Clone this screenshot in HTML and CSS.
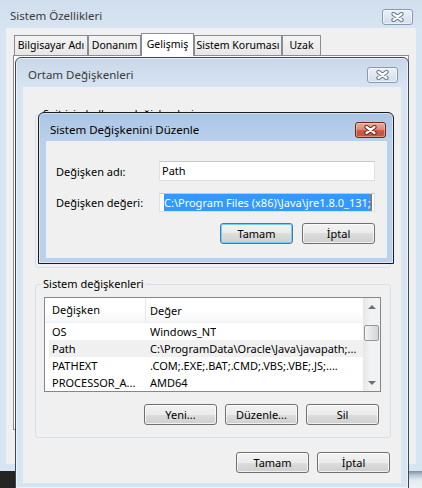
FILE: index.html
```html
<!DOCTYPE html>
<html lang="tr">
<head>
<meta charset="utf-8">
<title>Sistem Özellikleri</title>
<link rel="stylesheet" href="styles.css">
</head>
<body>
<div class="window outer">
  <div class="titlebar outer-title">
    <span class="title title-inactive">Sistem Özellikleri</span>
    <span class="close close-inactive"><svg class="xglyph" width="13" height="10" viewBox="0 0 13 10"><path class="x-out" d="M2.5 2 L10.5 8 M10.5 2 L2.5 8"/><path class="x-in" d="M2.5 2 L10.5 8 M10.5 2 L2.5 8"/></svg></span>
  </div>
  <div class="outer-client">
    <div class="tabs">
      <span class="tab tab-computer">Bilgisayar Adı</span>
      <span class="tab tab-hardware">Donanım</span>
      <span class="tab tab-advanced active">Gelişmiş</span>
      <span class="tab tab-protection">Sistem Koruması</span>
      <span class="tab tab-remote">Uzak</span>
    </div>
    <div class="tabpanel"></div>
  </div>
</div>

<div class="window middle">
  <div class="titlebar middle-title">
    <span class="title title-inactive">Ortam Değişkenleri</span>
    <span class="close close-inactive"><svg class="xglyph" width="13" height="10" viewBox="0 0 13 10"><path class="x-out" d="M2.5 2 L10.5 8 M10.5 2 L2.5 8"/><path class="x-in" d="M2.5 2 L10.5 8 M10.5 2 L2.5 8"/></svg></span>
  </div>
  <div class="middle-client">
    <fieldset class="group group-user">
      <legend>Sait için kullanıcı değişkenleri</legend>
    </fieldset>
    <fieldset class="group group-system">
      <legend>Sistem değişkenleri</legend>
      <div class="listview">
        <div class="lv-main">
          <div class="lv-header"><span class="h1">Değişken</span><span class="h2">Değer</span></div>
          <div class="lv-row"><span class="c1">OS</span><span class="c2">Windows_NT</span></div>
          <div class="lv-row sel"><span class="c1">Path</span><span class="c2">C:\ProgramData\Oracle\Java\javapath;...</span></div>
          <div class="lv-row"><span class="c1">PATHEXT</span><span class="c2">.COM;.EXE;.BAT;.CMD;.VBS;.VBE;.JS;....</span></div>
          <div class="lv-row"><span class="c1">PROCESSOR_A...</span><span class="c2">AMD64</span></div>
        </div>
        <div class="scrollbar">
          <span class="sb-btn"><span class="arrow-up"></span></span>
          <span class="sb-track"><span class="thumb"></span></span>
          <span class="sb-btn"><span class="arrow-down"></span></span>
        </div>
      </div>
      <div class="btnrow group-buttons">
        <button class="btn">Yeni...</button>
        <button class="btn">Düzenle...</button>
        <button class="btn">Sil</button>
      </div>
    </fieldset>
    <div class="btnrow dialog-buttons">
      <button class="btn">Tamam</button>
      <button class="btn">İptal</button>
    </div>
  </div>
</div>

<div class="window inner">
  <div class="titlebar inner-title">
    <span class="title">Sistem Değişkenini Düzenle</span>
    <span class="close close-active"><svg class="xglyph" width="13" height="10" viewBox="0 0 13 10"><path class="x-out" d="M2.5 2 L10.5 8 M10.5 2 L2.5 8"/><path class="x-in" d="M2.5 2 L10.5 8 M10.5 2 L2.5 8"/></svg></span>
  </div>
  <div class="inner-client">
    <div class="field">
      <span class="label">Değişken adı:</span>
      <span class="textbox">Path</span>
    </div>
    <div class="field">
      <span class="label">Değişken değeri:</span>
      <span class="textbox textbox-sel"><span class="selection">C:\Program Files (x86)\Java\jre1.8.0_131;</span><span class="caret"></span></span>
    </div>
    <div class="btnrow inner-buttons">
      <button class="btn btn-default">Tamam</button>
      <button class="btn">İptal</button>
    </div>
  </div>
</div>

<div class="desk-edge"></div>
</body>
</html>
```
FILE: styles.css
```css
* { box-sizing: border-box; }
html, body { margin: 0; }
body {
  width: 422px;
  height: 488px;
  overflow: hidden;
  position: relative;
  background: #242424;
  font-family: "Noto Sans", "Open Sans", sans-serif;
  font-size: 11px;
  line-height: 15px;
  color: #000;
}

/* generic window parts */
.window { position: absolute; display: flex; flex-direction: column; }
.titlebar { display: flex; justify-content: space-between; align-items: flex-start; flex: none; }
.title { white-space: nowrap; font-size: 11.5px; }
.title-inactive { color: #3b3b3b; }
.close {
  width: 31px;
  height: 16px;
  border-radius: 3px;
  display: flex;
  align-items: center;
  justify-content: center;
  flex: none;
}
.close-inactive {
  border: 1px solid #8b99ad;
  background: linear-gradient(#eaf0f7, #d3deeb);
  box-shadow: inset 0 0 0 1px rgba(255,255,255,0.55);
}
.close-active {
  border: 1px solid #6a2a22;
  background: linear-gradient(#eaae9f, #d98b79 45%, #c85a45 55%, #c2553f);
  box-shadow: inset 0 0 0 1px rgba(255,215,205,0.45);
}
.x-out { stroke: #667489; stroke-width: 4.2; stroke-linecap: round; fill: none; }
.x-in { stroke: #ffffff; stroke-width: 2.2; stroke-linecap: round; fill: none; }
.close-active .x-out { stroke: #6b2418; }

/* outer window */
.outer {
  left: 0;
  top: 0;
  width: 422px;
  height: 471px;
  padding: 0 6px;
  background: linear-gradient(#d1deed, #d7e4f2 30px);
}
.outer-title { height: 28px; padding: 9px 3px 0 4px; }
.outer-title .title { margin-top: -1px; }
.outer-client {
  width: 410px;
  height: 436px;
  background: #f0f0f0;
  padding: 5px 0 0 7px;
}
.tabs {
  display: flex;
  align-items: flex-end;
  height: 22px;
  padding-left: 1px;
  position: relative;
  z-index: 1;
}
.tab {
  height: 20px;
  padding: 0;
  border: 1px solid #898c95;
  border-bottom: none;
  background: linear-gradient(#f4f4f4, #e7e7e7);
  line-height: 18px;
  font-size: 10.5px;
  text-align: center;
  white-space: nowrap;
  overflow: hidden;
  flex: none;
}
.tab-computer { width: 74px; }
.tab-hardware { width: 53px; }
.tab-advanced { width: 53px; }
.tab-protection { width: 88px; }
.tab-remote { width: 39px; }
.tab.active {
  height: 23px;
  background: #fff;
  margin-bottom: -1px;
  line-height: 20px;
}
.tabpanel {
  width: 396px;
  height: 375px;
  border: 1px solid #898c95;
  background: #fff;
}

/* middle window */
.middle {
  left: 15px;
  top: 57px;
  width: 394px;
  height: 432px;
  border: 1px solid #3c4550;
  border-radius: 6px 6px 0 0;
  padding: 0 7px;
  background: linear-gradient(#c8d7ea, #d7e4f2 30px);
  box-shadow: inset 0 0 0 1px rgba(255,255,255,0.55);
}
.middle-title { height: 29px; padding: 9px 3px 0 5px; }
.middle-client {
  height: 396px;
  background: #f0f0f0;
  padding: 19px 10px 0 12px;
  display: flex;
  flex-direction: column;
}
.group {
  margin: 0;
  padding: 5px 9px 0 8px;
  border: 1px solid #d5dfe5;
  border-radius: 3px;
  height: 162px;
  min-inline-size: 0;
  flex: none;
}
.group legend {
  padding: 0 2px;
  margin-left: -3px;
  line-height: 16px;
  white-space: nowrap;
}
.group-system { margin-top: 8px; }

.listview {
  width: 337px;
  height: 95px;
  border: 1px solid #828790;
  background: #fff;
  display: flex;
}
.lv-main { flex: 1; min-width: 0; }
.lv-header {
  height: 25px;
  display: flex;
  align-items: center;
  border-bottom: 1px solid #eef0f3;
  background: linear-gradient(#ffffff, #ffffff 55%, #f6f7f9);
}
.h1 { width: 101px; padding-left: 7px; border-right: 1px solid #e3e8ee; height: 24px; line-height: 24px; }
.h2 { padding-left: 4px; }
.lv-row {
  height: 17px;
  line-height: 17px;
  margin-left: 4px;
  display: flex;
  white-space: nowrap;
}
.lv-row.sel { background: #f0f0f0; }
.c1 { width: 97px; padding-left: 3px; overflow: hidden; flex: none; }
.c2 { padding-left: 4px; overflow: hidden; }

.scrollbar {
  width: 17px;
  flex: none;
  display: flex;
  flex-direction: column;
  background: linear-gradient(to right, #e6e6e6, #f2f2f2 40%, #f2f2f2);
}
.sb-btn {
  height: 17px;
  flex: none;
  display: flex;
  align-items: center;
  justify-content: center;
}
.arrow-up {
  width: 0; height: 0;
  border-left: 4px solid transparent;
  border-right: 4px solid transparent;
  border-bottom: 4px solid #707070;
}
.arrow-down {
  width: 0; height: 0;
  border-left: 4px solid transparent;
  border-right: 4px solid transparent;
  border-top: 4px solid #707070;
}
.sb-track { flex: 1; display: flex; flex-direction: column; }
.thumb {
  margin: 10px 1px 0 1px;
  height: 16px;
  border: 1px solid #979797;
  border-radius: 2px;
  background: linear-gradient(to right, #f4f4f4, #e4e4e4 50%, #d6d6d6);
}

/* buttons */
.btnrow { display: flex; justify-content: flex-end; }
.btn {
  width: 73px;
  height: 21px;
  padding: 0;
  border: 1px solid #707070;
  border-radius: 3px;
  background: linear-gradient(#f2f2f2, #ebebeb 50%, #dddddd 50%, #cfcfcf);
  box-shadow: inset 0 0 0 1px rgba(255,255,255,0.7);
  font: inherit;
  color: #000;
  line-height: 18px;
}
.btn-default {
  border-color: #3c7fb1;
  box-shadow: inset 0 0 0 1px #74cdf2;
}
.group-buttons { margin-top: 12px; gap: 8px; margin-right: 2px; }
.dialog-buttons { margin-top: 14px; gap: 8px; margin-right: 1px; }

/* inner window */
.inner {
  left: 38px;
  top: 112px;
  width: 356px;
  height: 152px;
  border: 1px solid #1c1c1c;
  border-radius: 6px 6px 0 0;
  padding: 0 6px 5px 7px;
  background: linear-gradient(#aac5e5, #b9d1ea 28px);
  box-shadow: inset 0 0 0 1px rgba(255,255,255,0.5);
}
.inner-title { height: 28px; padding: 9px 1px 0 4px; }
.inner-client {
  height: 117px;
  background: #f0f0f0;
  padding: 20px 12px 0 10px;
}
.field { display: flex; align-items: center; height: 20px; }
.field + .field { margin-top: 11px; }
.label { width: 103px; flex: none; white-space: nowrap; }
.textbox {
  width: 219px;
  height: 20px;
  background: #fff;
  border: 1px solid #dde1e6;
  border-top-color: #c5c8ce;
  padding: 0 2px;
  line-height: 18px;
  white-space: nowrap;
  overflow: hidden;
  display: flex;
  align-items: center;
}
.textbox-sel { height: 19px; padding-left: 4px; }
.selection {
  background: #3399ff;
  color: #fff;
  line-height: 17px;
  height: 17px;
}
.caret { width: 1px; height: 17px; background: #cc6600; flex: none; }
.inner-buttons { margin-top: 11px; gap: 9px; }

.desk-edge {
  position: absolute;
  left: 409px;
  top: 471px;
  width: 13px;
  height: 17px;
  background: linear-gradient(#7f8fa4, #b7c4d4 4px, #e4eaf1 9px, #eef2f7);
}
```
